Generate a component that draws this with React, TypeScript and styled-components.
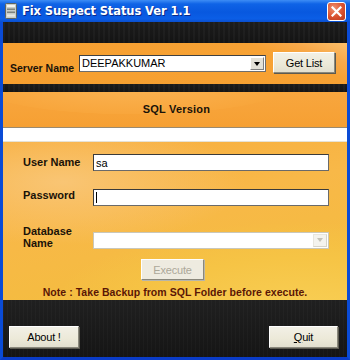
import React from "react";
import styled, { createGlobalStyle, css } from "styled-components";

const GlobalStyle = createGlobalStyle`
  html, body {
    margin: 0;
    padding: 0;
    background: #ffffff;
  }
  body {
    font-family: "Liberation Sans", Arial, sans-serif;
  }
`;

const Window = styled.div`
  width: 350px;
  height: 360px;
  box-sizing: border-box;
  display: flex;
  flex-direction: column;
  background: #0831d9;
  border-left: 3px solid #0a4bd6;
  border-right: 3px solid #0a4bd6;
  border-bottom: 3px solid #0a3cc8;
`;

const TitleBar = styled.div`
  height: 22px;
  margin: 0 -3px;
  padding: 0 4px 0 5px;
  display: flex;
  align-items: center;
  gap: 5px;
  background: linear-gradient(
    180deg,
    #3d8df5 0%,
    #0f63e6 18%,
    #0858df 55%,
    #0b5ee6 85%,
    #0a4fcf 100%
  );
`;

const Title = styled.span`
  flex: 1;
  color: #ffffff;
  font-family: "DejaVu Sans", Verdana, sans-serif;
  font-weight: bold;
  font-size: 11.5px;
  letter-spacing: -0.1px;
  text-shadow: 1px 1px 0 #0a2a8a;
`;

const CloseButton = styled.div`
  width: 19px;
  height: 19px;
  box-sizing: border-box;
  border: 1px solid #ffffff;
  border-radius: 3px;
  background: radial-gradient(circle at 35% 30%, #f0906e 0%, #d9512f 55%, #b8381c 100%);
  display: flex;
  align-items: center;
  justify-content: center;
`;

const DarkBand = styled.div<{ $h: number }>`
  height: ${(p) => p.$h}px;
  background: repeating-linear-gradient(
      90deg,
      rgba(255, 255, 255, 0.03) 0px,
      rgba(255, 255, 255, 0.03) 2px,
      rgba(0, 0, 0, 0) 2px,
      rgba(0, 0, 0, 0) 5px
    ),
    linear-gradient(180deg, #1c1c1c, #141414);
`;

const ServerPanel = styled.div`
  height: 41px;
  display: flex;
  align-items: center;
  padding: 0 0 0 7px;
  background: linear-gradient(200deg, #fbbf6a 0%, #f8a94a 12%, #f7a234 22%, #f69f2f 100%);
`;

const BoldLabel = styled.span`
  font-family: "Liberation Sans", Arial, sans-serif;
  font-weight: bold;
  font-size: 11px;
  white-space: nowrap;
  color: #1a1208;
`;

const ServerLabel = styled(BoldLabel)`
  width: 69px;
  flex-shrink: 0;
  margin-top: 9px;
  font-size: 10.5px;
  letter-spacing: 0;
`;

const Combo = styled.div<{ $w: number; $disabled?: boolean }>`
  width: ${(p) => p.$w}px;
  flex-shrink: 0;
  height: 17px;
  box-sizing: border-box;
  display: flex;
  align-items: stretch;
  background: #ffffff;
  border: 1px solid ${(p) => (p.$disabled ? "#c9c7ba" : "#6e6e6e")};
  border-top-color: ${(p) => (p.$disabled ? "#c9c7ba" : "#404040")};
  border-left-color: ${(p) => (p.$disabled ? "#c9c7ba" : "#404040")};
`;

const ComboText = styled.span`
  flex: 1;
  padding-left: 2px;
  font-size: 11px;
  line-height: 14px;
  color: #000000;
`;

const ComboArrow = styled.div<{ $disabled?: boolean }>`
  width: 14px;
  margin: 1px;
  box-sizing: border-box;
  display: flex;
  align-items: center;
  justify-content: center;
  background: ${(p) => (p.$disabled ? "#f4f3ee" : "#e3e1d8")};
  border: 1px solid ${(p) => (p.$disabled ? "#e8e6de" : "#ffffff")};
  border-right-color: ${(p) => (p.$disabled ? "#d6d4ca" : "#808080")};
  border-bottom-color: ${(p) => (p.$disabled ? "#d6d4ca" : "#808080")};

  &::after {
    content: "";
    width: 0;
    height: 0;
    border-left: 3.5px solid transparent;
    border-right: 3.5px solid transparent;
    border-top: 4px solid ${(p) => (p.$disabled ? "#c4c2b8" : "#000000")};
  }
`;

const Button = styled.div<{ $w: number; $h?: number; $disabled?: boolean }>`
  width: ${(p) => p.$w}px;
  height: ${(p) => p.$h ?? 22}px;
  flex-shrink: 0;
  box-sizing: border-box;
  display: flex;
  align-items: center;
  justify-content: center;
  background: linear-gradient(180deg, #f2f0e6 0%, #ece9d8 60%, #e2dfcf 100%);
  border: 1px solid #ffffff;
  border-right-color: #8a887c;
  border-bottom-color: #8a887c;
  box-shadow: 1px 1px 0 #5c5a50;
  font-family: "Liberation Sans", Arial, sans-serif;
  font-size: 11px;
  letter-spacing: -0.2px;
  color: ${(p) => (p.$disabled ? "#aca899" : "#000000")};
  ${(p) =>
    p.$disabled &&
    css`
      background: #eeebe0;
      box-shadow: 1px 1px 0 #b8b5a8;
    `}
`;

const GetListButton = styled(Button)`
  margin-left: 7px;
  margin-top: -2px;
`;

const SqlBand = styled.div`
  height: 35px;
  display: flex;
  align-items: center;
  justify-content: center;
  background: radial-gradient(ellipse 260px 50px at 130px -8px, #fbb455 0%, #f8a63c 60%, rgba(0, 0, 0, 0) 61%),
    linear-gradient(180deg, #f8a63e 0%, #f6a033 100%);
  border-bottom: 1px solid #9a8a70;
`;

const SqlTitle = styled(BoldLabel)`
  margin-top: -2px;
  padding-left: 3px;
  letter-spacing: 0.2px;
`;

const WhiteBar = styled.div`
  height: 13px;
  background: #ffffff;
  border-bottom: 1px solid #e6e2d6;
`;

const FormPanel = styled.div`
  height: 158px;
  display: flex;
  flex-direction: column;
  padding: 0 0 0 20px;
  box-sizing: border-box;
  background: radial-gradient(ellipse 340px 120px at 300px 170px, #f8cf55 0%, #f6c445 45%, rgba(0, 0, 0, 0) 75%),
    radial-gradient(ellipse 260px 90px at 60px 40px, #f9c574 0%, rgba(0, 0, 0, 0) 70%),
    linear-gradient(170deg, #f7ad3d 0%, #f8b848 40%, #f5bb42 70%, #f3bf3c 100%);
`;

const FieldRow = styled.div<{ $top: number }>`
  display: flex;
  align-items: center;
  margin-top: ${(p) => p.$top}px;
`;

const FieldLabel = styled(BoldLabel)<{ $lift?: number }>`
  width: 70px;
  line-height: 12px;
  margin-top: ${(p) => -(p.$lift ?? 0)}px;
`;

const TextInput = styled.div`
  width: 236px;
  height: 17px;
  box-sizing: border-box;
  background: #ffffff;
  border: 1px solid #6a6a6a;
  border-top-color: #3a3a3a;
  border-left-color: #3a3a3a;
  padding-left: 2px;
  font-size: 11px;
  line-height: 14px;
  color: #000000;
  display: flex;
  align-items: center;
`;

const Caret = styled.span`
  width: 1px;
  height: 11px;
  background: #000000;
`;

const ExecuteButton = styled(Button)`
  margin: 10px 0 0 118px;
`;

const Note = styled(BoldLabel)`
  margin: 6px 0 0 -20px;
  text-align: center;
  color: #5a1606;
  font-size: 10.5px;
  letter-spacing: 0.05px;
`;

const Footer = styled.div`
  flex: 1;
  display: flex;
  align-items: flex-end;
  justify-content: space-between;
  padding: 0 9px 9px 6px;
  background: repeating-linear-gradient(
      90deg,
      rgba(255, 255, 255, 0.025) 0px,
      rgba(255, 255, 255, 0.025) 1px,
      rgba(0, 0, 0, 0) 1px,
      rgba(0, 0, 0, 0) 4px
    ),
    linear-gradient(180deg, #202020, #151515);
`;

function AppIcon() {
  return (
    <svg width="12" height="16" viewBox="0 0 12 16">
      <rect x="0.5" y="0.5" width="11" height="15" rx="1" fill="#c9cdc8" stroke="#5d6460" />
      <rect x="2" y="2" width="8" height="2" fill="#f2f4f0" />
      <rect x="2" y="5.5" width="8" height="1.5" fill="#7d847f" />
      <rect x="2" y="8.5" width="8" height="1.5" fill="#7d847f" />
      <rect x="2" y="11.5" width="8" height="2" fill="#e6e9e4" />
    </svg>
  );
}

export default function App() {
  return (
    <>
      <GlobalStyle />
      <Window>
        <TitleBar>
          <AppIcon />
          <Title>Fix Suspect Status Ver 1.1</Title>
          <CloseButton>
            <svg width="11" height="11" viewBox="0 0 11 11">
              <path d="M1.5 1.5 L9.5 9.5 M9.5 1.5 L1.5 9.5" stroke="#ffffff" strokeWidth="2.2" strokeLinecap="square" />
            </svg>
          </CloseButton>
        </TitleBar>
        <DarkBand $h={21} />
        <ServerPanel>
          <ServerLabel>Server Name</ServerLabel>
          <Combo $w={187}>
            <ComboText>DEEPAKKUMAR</ComboText>
            <ComboArrow />
          </Combo>
          <GetListButton $w={62} $h={21}>
            Get List
          </GetListButton>
        </ServerPanel>
        <DarkBand $h={8} />
        <SqlBand>
          <SqlTitle>SQL Version</SqlTitle>
        </SqlBand>
        <WhiteBar />
        <FormPanel>
          <FieldRow $top={12}>
            <FieldLabel $lift={2}>User Name</FieldLabel>
            <TextInput>sa</TextInput>
          </FieldRow>
          <FieldRow $top={18}>
            <FieldLabel $lift={6}>Password</FieldLabel>
            <TextInput>
              <Caret />
            </TextInput>
          </FieldRow>
          <FieldRow $top={25}>
            <FieldLabel $lift={6}>
              Database
              <br />
              Name
            </FieldLabel>
            <Combo $w={236} $disabled>
              <ComboText />
              <ComboArrow $disabled />
            </Combo>
          </FieldRow>
          <ExecuteButton $w={63} $h={21} $disabled>
            Execute
          </ExecuteButton>
          <Note>Note : Take Backup from SQL Folder before execute.</Note>
        </FormPanel>
        <Footer>
          <Button $w={70} $h={22}>
            About !
          </Button>
          <Button $w={69} $h={22}>
            <u>Q</u>uit
          </Button>
        </Footer>
      </Window>
    </>
  );
}
